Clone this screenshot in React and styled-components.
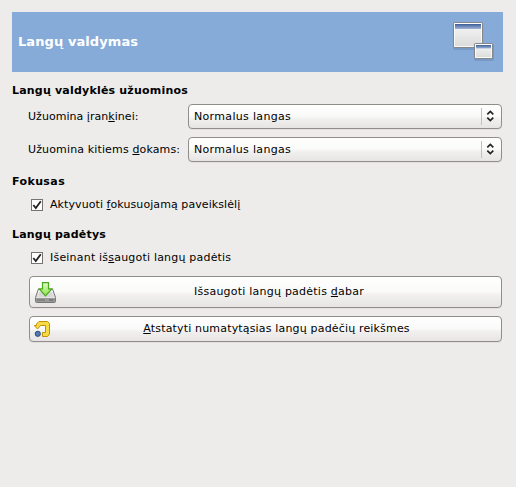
import React from "react";
import styled, { createGlobalStyle } from "styled-components";

const GlobalStyle = createGlobalStyle`
  * { box-sizing: border-box; }
  html, body { margin: 0; background: #edecea; }
  body { font: 11px/16px "DejaVu Sans", sans-serif; color: #000; }
`;

const Page = styled.main`
  width: 516px;
  height: 487px;
  padding: 12px 13px 0 12px;
  background: #edecea;
  overflow: hidden;
`;

const Header = styled.header`
  display: flex;
  justify-content: space-between;
  height: 60px;
  padding: 6px;
  background: #86abd9;
`;

const Title = styled.h1`
  margin: 16px 0 0;
  font-size: 13px;
  line-height: 16px;
  color: #fff;
  white-space: nowrap;
  letter-spacing: 0.08px;
`;

const Section = styled.section`
  padding-top: ${(p) => p.$top}px;
`;

const SectionTitle = styled.h2`
  margin: 0;
  height: 16px;
  font-size: 11px;
  line-height: 16px;
  white-space: nowrap;
  letter-spacing: ${(p) => p.$spacing || 0}px;
`;

const Text = styled.span`
  white-space: nowrap;
  letter-spacing: ${(p) => p.$spacing || 0}px;
`;

const Mnemonic = styled.u`
  text-decoration: underline;
  text-decoration-thickness: 1px;
  text-underline-offset: 1px;
  text-decoration-skip-ink: none;
`;

const Fields = styled.div`
  display: grid;
  grid-template-columns: 160px 314px;
  grid-auto-rows: 25px;
  row-gap: 8px;
  margin: 5px 0 0 16px;
`;

const FieldLabel = styled.label`
  padding-top: 5px;
`;

const surface = `
  border: 1px solid #918e8a;
  border-radius: 4px;
  background: linear-gradient(#ffffff 0%, #fafaf9 48%, #f1f0ef 60%, #e6e5e3 100%);
  box-shadow: 0 1px 0 #e2e1df;
  color: #000;
  font: inherit;
`;

const Select = styled.button`
  ${surface}
  display: flex;
  justify-content: space-between;
  align-items: flex-start;
  padding: 3px 6px 0 5px;
  text-align: left;
`;

const SelectText = styled(Text)`
  margin-top: 1px;
`;

const SelectEnd = styled.span`
  display: flex;
  align-items: flex-start;
  height: 17px;
  padding: 2px 0 0 4px;
  border-left: 1px solid #c2c0bd;
`;

const CheckRow = styled.label`
  display: flex;
  height: 16px;
  margin: 7px 0 0 19px;
`;

const CheckBox = styled.span`
  display: block;
  width: 12px;
  height: 12px;
  margin: 2px 7px 0 0;
  border: 1px solid #77746f;
  background: #fff;
  svg { display: block; overflow: visible; }
`;

const Button = styled.button`
  ${surface}
  display: grid;
  grid-template-columns: 24px 1fr;
  width: 473px;
  height: ${(p) => p.$height}px;
  margin: ${(p) => p.$top}px 0 0 17px;
  padding: 3px ${(p) => p.$right}px 0 3px;
  text-align: center;
`;

const ButtonText = styled(Text)`
  margin-top: ${(p) => p.$drop}px;
`;

const ButtonIcon = styled.span`
  display: block;
  height: 22px;
  margin-top: ${(p) => p.$drop || 0}px;
  svg { display: block; }
`;

const WindowsIcon = () => (
  <svg width="46" height="44" viewBox="0 0 46 44">
    <defs>
      <linearGradient id="pane" x2="0" y2="1">
        <stop offset="0" stopColor="#f8f8f8" />
        <stop offset="1" stopColor="#dadada" />
      </linearGradient>
      <linearGradient id="bar" x2="0" y2="1">
        <stop offset="0" stopColor="#3b5d99" />
        <stop offset="1" stopColor="#a3b7d8" />
      </linearGradient>
    </defs>
    <rect x="2" y="5" width="30" height="27" rx="1.5" fill="#47648c" opacity=".25" />
    <rect x="2.5" y="4.5" width="29" height="25" rx="1.5" fill="url(#pane)" stroke="#85878a" strokeWidth="1.2" />
    <rect x="3.5" y="5.5" width="27" height="23" fill="none" stroke="#fff" strokeOpacity=".8" />
    <rect x="4" y="6" width="26" height="5" fill="url(#bar)" />
    <rect x="23" y="26" width="20" height="17" rx="1.5" fill="#47648c" opacity=".25" />
    <rect x="23.5" y="25.5" width="18" height="15" rx="1.5" fill="url(#pane)" stroke="#85878a" strokeWidth="1.2" />
    <rect x="24.5" y="26.5" width="16" height="13" fill="none" stroke="#fff" strokeOpacity=".8" />
    <rect x="25" y="27" width="15" height="3.5" fill="url(#bar)" />
  </svg>
);

const Arrows = () => (
  <svg width="9" height="12" viewBox="0 0 9 12" fill="none" stroke="#222" strokeWidth="1.7">
    <path d="M1.3 4.3 4.3 1.5 7.3 4.3M1.3 7.7 4.3 10.5 7.3 7.7" />
  </svg>
);

const Check = () => (
  <svg width="10" height="10" viewBox="0 0 10 10" fill="none" stroke="#222" strokeWidth="1.8">
    <path d="M1.3 5 3.8 8 8.8 1.2" />
  </svg>
);

const SaveIcon = () => (
  <svg width="24" height="22" viewBox="0 0 24 22">
    <defs>
      <linearGradient id="drive" x2="0" y2="1">
        <stop offset="0" stopColor="#f4f4f4" />
        <stop offset="1" stopColor="#c4c4c4" />
      </linearGradient>
      <linearGradient id="green" x2="0" y2="1">
        <stop offset="0" stopColor="#e2fbc9" />
        <stop offset="1" stopColor="#8ae34a" />
      </linearGradient>
    </defs>
    <path d="M5.2 7.5H19.8L22.5 15.5V19.5Q22.5 20.5 21.5 20.5H3.5Q2.5 20.5 2.5 19.5V15.5Z" fill="url(#drive)" stroke="#777" />
    <path d="M3 15.5H22V20H3Z" fill="#9b9b9b" />
    <path d="M3 15.5H22" stroke="#e4e4e4" />
    <path d="M4.5 18H11.5" stroke="#6c6c6c" strokeDasharray="1 1" strokeWidth="2" />
    <path d="M16 18H20.5" stroke="#5c5c5c" />
    <ellipse cx="12.5" cy="12" rx="7" ry="3" fill="#d6d6d6" />
    <path d="M9.5 .7H15.5V6.8H18.8L12.5 13.8 6.2 6.8H9.5Z" fill="url(#green)" stroke="#49a81a" strokeWidth="1.2" />
  </svg>
);

const ResetIcon = () => (
  <svg width="24" height="20" viewBox="0 0 24 20">
    <path
      d="M3.5 5.5V4L6 1.5H14.5L16.5 3.5V14L14.5 16.5H9.5V12.5H12.5V5.5H7.5L4.5 9 1.3 5.5Z"
      fill="#f7da45"
      stroke="#c09300"
      strokeLinejoin="round"
    />
    <circle cx="4.8" cy="13.8" r="2.6" fill="#527bb5" stroke="#294c7c" />
  </svg>
);

function SelectField({ children, value }) {
  return (
    <>
      <FieldLabel>{children}</FieldLabel>
      <Select type="button">
        <SelectText $spacing={0.33}>{value}</SelectText>
        <SelectEnd><Arrows /></SelectEnd>
      </Select>
    </>
  );
}

export default function App() {
  return (
    <Page>
      <GlobalStyle />
      <Header>
        <Title>Langų valdymas</Title>
        <WindowsIcon />
      </Header>

      <Section $top={11}>
        <SectionTitle $spacing={0.2}>Langų valdyklės užuominos</SectionTitle>
        <Fields>
          <SelectField value="Normalus langas">
            <Text $spacing={0.04}>Užuomina įran<Mnemonic>k</Mnemonic>inei:</Text>
          </SelectField>
          <SelectField value="Normalus langas">
            <Text $spacing={0.14}>Užuomina kitiems <Mnemonic>d</Mnemonic>okams:</Text>
          </SelectField>
        </Fields>
      </Section>

      <Section $top={12}>
        <SectionTitle $spacing={0.4}>Fokusas</SectionTitle>
        <CheckRow>
          <CheckBox><Check /></CheckBox>
          <Text $spacing={0.08}>Aktyvuoti <Mnemonic>f</Mnemonic>okusuojamą paveikslėlį</Text>
        </CheckRow>
      </Section>

      <Section $top={14}>
        <SectionTitle $spacing={0.2}>Langų padėtys</SectionTitle>
        <CheckRow>
          <CheckBox><Check /></CheckBox>
          <Text $spacing={0.2}>Išeinant iš<Mnemonic>s</Mnemonic>augoti langų padėtis</Text>
        </CheckRow>
        <Button type="button" $height={32} $top={10} $right={0}>
          <ButtonIcon $drop={2}><SaveIcon /></ButtonIcon>
          <ButtonText $drop={4} $spacing={0.23}>Išsaugoti langų padėtis <Mnemonic>d</Mnemonic>abar</ButtonText>
        </Button>
        <Button type="button" $height={26} $top={8} $right={5}>
          <ButtonIcon><ResetIcon /></ButtonIcon>
          <ButtonText $drop={1} $spacing={0.17}><Mnemonic>A</Mnemonic>tstatyti numatytąsias langų padėčių reikšmes</ButtonText>
        </Button>
      </Section>
    </Page>
  );
}
